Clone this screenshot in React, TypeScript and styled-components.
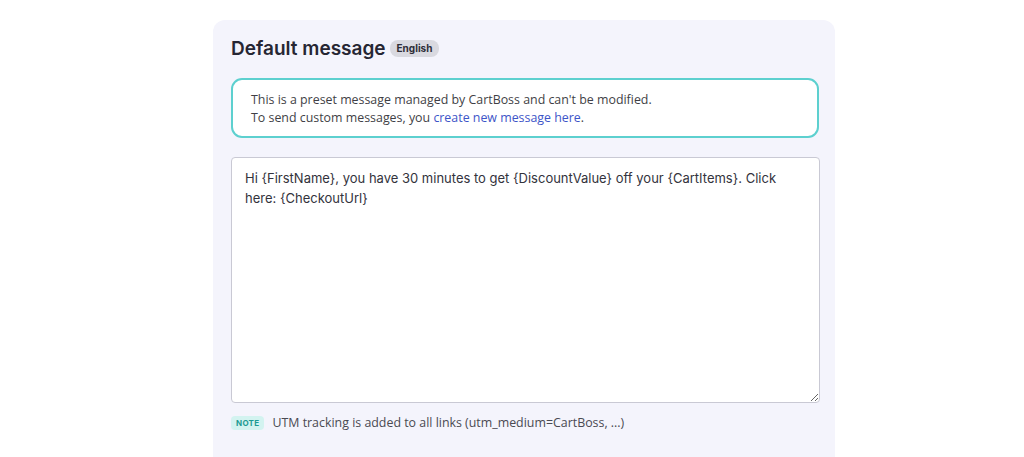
import { createGlobalStyle } from 'styled-components';
import styled from 'styled-components';

const GlobalStyle = createGlobalStyle`
  html, body {
    margin: 0;
    padding: 0;
    background: #ffffff;
  }
  body {
    font-family: "Open Sans", "Noto Sans", sans-serif;
  }
`;

const Page = styled.div`
  height: 457px;
  overflow: hidden;
  padding: 20px 0 0 213px;
  box-sizing: border-box;
`;

const Card = styled.section`
  width: 622px;
  height: 470px;
  box-sizing: border-box;
  background: #f4f4fc;
  border-radius: 12px;
  padding: 17px 16px 0 18px;
`;

const Header = styled.div`
  display: flex;
  align-items: center;
  gap: 4px;
  height: 22px;
`;

const Title = styled.h2`
  margin: 0;
  font-family: "Inter", "Noto Sans", sans-serif;
  font-size: 19px;
  font-weight: 600;
  color: #262633;
`;

const Badge = styled.span<{ $tone: 'gray' | 'teal' }>`
  display: inline-flex;
  align-items: center;
  font-family: "Inter", "Noto Sans", sans-serif;
  font-weight: 700;
  border-radius: 8px;
  ${({ $tone }) =>
    $tone === 'gray'
      ? `
    background: #d9d9e0;
    color: #2e2e38;
    font-size: 10px;
    height: 17px;
    padding: 0 7px;
  `
      : `
    background: #d3f3f0;
    color: #1c9a92;
    font-size: 8px;
    height: 14px;
    padding: 0 5px;
    border-radius: 4px;
    letter-spacing: 0.3px;
  `}
`;

const InfoBox = styled.div`
  margin-top: 19px;
  width: 588px;
  height: 60px;
  box-sizing: border-box;
  background: #ffffff;
  border: 2px solid #5dd0cf;
  border-radius: 11px;
  padding: 11px 0 0 18px;
  font-size: 12.4px;
  line-height: 18px;
  color: #3f3f46;
`;

const Link = styled.a`
  color: #3d55c8;
  text-decoration: none;
`;

const MessageInput = styled.textarea`
  display: block;
  margin-top: 19px;
  width: 589px;
  height: 246px;
  box-sizing: border-box;
  border: 1px solid #c9c9d4;
  border-radius: 4px;
  background: #ffffff;
  padding: 11px 13px;
  font-family: "Inter", "Noto Sans", sans-serif;
  font-size: 13px;
  line-height: 19.5px;
  color: #33333c;
  resize: vertical;
  outline: none;
`;

const NoteRow = styled.div`
  display: flex;
  align-items: center;
  gap: 8px;
  margin-top: 11px;
  font-size: 12.4px;
  color: #4a4a52;
`;

export default function App() {
  return (
    <>
      <GlobalStyle />
      <Page>
        <Card>
          <Header>
            <Title>Default message</Title>
            <Badge $tone="gray">English</Badge>
          </Header>
          <InfoBox>
            This is a preset message managed by CartBoss and can't be modified.
            <br />
            To send custom messages, you <Link href="#">create new message here</Link>.
          </InfoBox>
          <MessageInput
            readOnly
            defaultValue="Hi {FirstName}, you have 30 minutes to get {DiscountValue} off your {CartItems}. Click here: {CheckoutUrl}"
          />
          <NoteRow>
            <Badge $tone="teal">NOTE</Badge>
            UTM tracking is added to all links (utm_medium=CartBoss, ...)
          </NoteRow>
        </Card>
      </Page>
    </>
  );
}
